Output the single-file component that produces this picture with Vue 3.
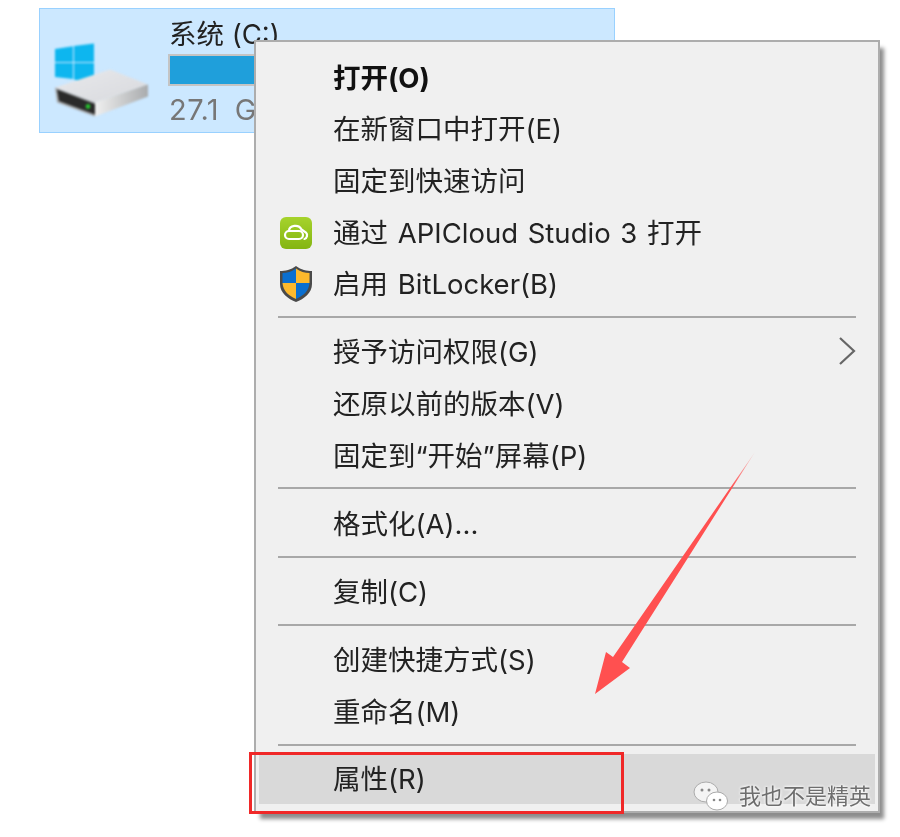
<template>
  <div class="page">
    <div class="drive">
      <svg class="drive-icon" width="100" height="76" viewBox="0 0 100 76">
        <defs>
          <linearGradient id="hddTop" x1="0" y1="0" x2="1" y2="1">
            <stop offset="0" stop-color="#e8e9ec" />
            <stop offset="1" stop-color="#d8d9dd" />
          </linearGradient>
          <linearGradient id="hddSide" x1="0" y1="0" x2="1" y2="0">
            <stop offset="0" stop-color="#f0f0f0" />
            <stop offset="1" stop-color="#a9abad" />
          </linearGradient>
        </defs>
        <g fill="#0db6ef">
          <path d="M0 6 L18 3.2 V19 H0 Z" />
          <path d="M19 3 L39 0.5 V19 H19 Z" />
          <path d="M0 20 H18 V36 L0 34 Z" />
          <path d="M19 20 H39 V41 L19 36.5 Z" />
        </g>
        <path d="M0 44.5 L55 26.5 L93 41.5 L40 59.5 Z" fill="url(#hddTop)" />
        <path d="M40 59.5 L93 41.5 V53.5 L40 73.5 Z" fill="url(#hddSide)" />
        <path d="M0 44.5 L40 59.5 V73.5 L2 59.5 Z" fill="#a5a7a9" />
        <path d="M2 46.5 L40 61 V71.5 L4 58 Z" fill="#2a2a2a" />
        <circle cx="33" cy="63.5" r="2.4" fill="#25c02e" />
      </svg>
      <div class="drive-info">
        <div class="drive-name">系统 (C:)</div>
        <div class="drive-bar"><div class="drive-fill"></div></div>
        <div class="drive-size">27.1 GB</div>
      </div>
    </div>

    <div class="menu">
      <template v-for="(item, i) in items" :key="i">
        <div v-if="item.sep" class="sep"></div>
        <div v-else class="row" :class="{ bold: item.bold, active: item.active }">
          <svg v-if="item.icon === 'cloud'" class="row-icon" width="34" height="34" viewBox="0 0 34 34">
            <defs>
              <linearGradient id="cloudBg" x1="0" y1="0" x2="0" y2="1">
                <stop offset="0" stop-color="#a6d32c" />
                <stop offset="1" stop-color="#84b512" />
              </linearGradient>
            </defs>
            <rect x="1" y="1" width="32" height="32" rx="6" fill="url(#cloudBg)" />
            <rect x="6" y="15" width="18" height="8" rx="4" fill="none" stroke="#fff" stroke-width="2.2" />
            <path d="M10 15 C10 9 20 8 22.5 13.5 L27 16.5 C29 18.5 28 22.5 25.5 23" fill="none" stroke="#fff" stroke-width="2.2" stroke-linecap="round" />
          </svg>
          <svg v-else-if="item.icon === 'shield'" class="row-icon" width="34" height="38" viewBox="0 0 34 38">
            <path d="M17 1 C12 5 6 6 1 6 V19 C1 28 9 34 17 37 C25 34 33 28 33 19 V6 C28 6 22 5 17 1 Z" fill="#4a4a4a" />
            <path d="M17 3.5 C13 6.5 8 8 3.5 8 V18 H17 Z" fill="#0a6fd0" />
            <path d="M17 3.5 C21 6.5 26 8 30.5 8 V18 H17 Z" fill="#fdb92c" />
            <path d="M3.5 18 H17 V34 C10 31 4 26 3.5 18 Z" fill="#fdb92c" />
            <path d="M30.5 18 H17 V34 C24 31 30 26 30.5 18 Z" fill="#0a6fd0" />
          </svg>
          <span class="label">{{ item.text }}</span>
          <svg v-if="item.sub" class="chevron" width="20" height="30" viewBox="0 0 20 30">
            <path d="M3 2 L17 15 L3 28" fill="none" stroke="#666" stroke-width="2.2" />
          </svg>
        </div>
      </template>
    </div>

    <svg class="arrow" width="170" height="250" viewBox="590 450 170 250">
      <defs>
        <linearGradient id="tail" x1="755" y1="452" x2="595" y2="694" gradientUnits="userSpaceOnUse">
          <stop offset="0" stop-color="#ff5050" stop-opacity="0.2" />
          <stop offset="0.15" stop-color="#ff5050" />
          <stop offset="1" stop-color="#ff5050" />
        </linearGradient>
      </defs>
      <path d="M755 452 L622 662 L630 668 L595 694 L606 652 L613 657 Z" fill="url(#tail)" />
    </svg>

    <div class="redbox"></div>

    <div class="mark">
      <svg class="mark-icon" width="36" height="32" viewBox="0 0 36 32">
        <ellipse cx="13" cy="12" rx="12" ry="10" fill="#f4f4f4" stroke="#aaa" stroke-width="1" />
        <ellipse cx="24" cy="21" rx="10.5" ry="9" fill="#fff" stroke="#aaa" stroke-width="1" />
        <circle cx="9" cy="10" r="1.5" fill="#888" />
        <circle cx="16" cy="10" r="1.5" fill="#888" />
        <circle cx="21" cy="20" r="1.3" fill="#888" />
        <circle cx="27" cy="20" r="1.3" fill="#888" />
      </svg>
      <span class="mark-text">我也不是精英</span>
    </div>
  </div>
</template>

<script setup>
const items = [
  { text: '打开(O)', bold: true },
  { text: '在新窗口中打开(E)' },
  { text: '固定到快速访问' },
  { text: '通过 APICloud Studio 3 打开', icon: 'cloud' },
  { text: '启用 BitLocker(B)', icon: 'shield' },
  { sep: true },
  { text: '授予访问权限(G)', sub: true },
  { text: '还原以前的版本(V)' },
  { text: '固定到“开始”屏幕(P)' },
  { sep: true },
  { text: '格式化(A)...' },
  { sep: true },
  { text: '复制(C)' },
  { sep: true },
  { text: '创建快捷方式(S)' },
  { text: '重命名(M)' },
  { sep: true },
  { text: '属性(R)', active: true }
]
</script>

<style scoped>
.page {
  position: relative;
  width: 900px;
  height: 837px;
  padding: 8px 0 0 39px;
  box-sizing: border-box;
  background: #fff;
  font-family: Inter, "Noto Sans CJK SC", sans-serif;
  overflow: hidden;
}

.drive {
  display: flex;
  width: 576px;
  height: 125px;
  box-sizing: border-box;
  padding: 9px 0 0 15px;
  gap: 14px;
  background: #cce8ff;
  border: 1.5px solid #99d1ff;
}

.drive-icon {
  margin-top: 25px;
  flex: none;
  overflow: visible;
  filter: blur(0.8px);
}

.drive-info {
  flex: 1;
  filter: blur(0.5px);
}

.drive-name {
  font-size: 27.5px;
  line-height: 32px;
  color: #222;
}

.drive-bar {
  width: 300px;
  height: 32px;
  margin-top: 4px;
  margin-left: -1px;
  border: 2px solid #c4c4c4;
  box-sizing: border-box;
}

.drive-fill {
  height: 100%;
  background: #1f9fdb;
}

.drive-size {
  font-size: 29px;
  line-height: 40px;
  margin-top: 4px;
  word-spacing: 7px;
  letter-spacing: 0.5px;
  color: #777;
}

.menu {
  position: absolute;
  left: 254px;
  top: 40px;
  width: 626px;
  height: 773px;
  box-sizing: border-box;
  padding: 10px 3px 0 3px;
  background: #f0f0f0;
  border: 2px solid #adadad;
  box-shadow: 5px 7px 4px -1px rgba(0, 0, 0, 0.45);
}

.row {
  position: relative;
  display: flex;
  align-items: center;
  height: 51.6px;
  box-sizing: border-box;
  padding-left: 74px;
  padding-bottom: 4px;
  font-size: 27.5px;
  word-spacing: 2px;
  color: #222;
}

.row.bold {
  font-weight: 700;
  color: #111;
}

.row.active {
  height: 49.5px;
  background: #d9d9d9;
}

.label {
  filter: blur(0.5px);
  white-space: nowrap;
}

.row-icon {
  position: absolute;
  left: 20px;
  top: 50%;
  transform: translateY(-50%);
  filter: blur(0.5px);
}

.chevron {
  position: absolute;
  right: 18px;
  top: 9px;
}

.sep {
  height: 2px;
  margin: 6px 19px 8.6px 19px;
  background: #a8a8a8;
}

.arrow {
  position: absolute;
  left: 590px;
  top: 450px;
}

.redbox {
  position: absolute;
  left: 249px;
  top: 752px;
  width: 375px;
  height: 62px;
  box-sizing: border-box;
  border: 3px solid #f02828;
}

.mark {
  position: absolute;
  left: 693px;
  top: 780px;
  display: flex;
  align-items: center;
  gap: 10px;
  font-size: 22px;
  line-height: 32px;
}

.mark-icon {
  filter: blur(0.6px);
}

.mark-text {
  color: #6e6e6e;
  text-shadow: 0 0 3px #fff, 0 0 3px #fff;
  filter: blur(0.6px);
}
</style>
